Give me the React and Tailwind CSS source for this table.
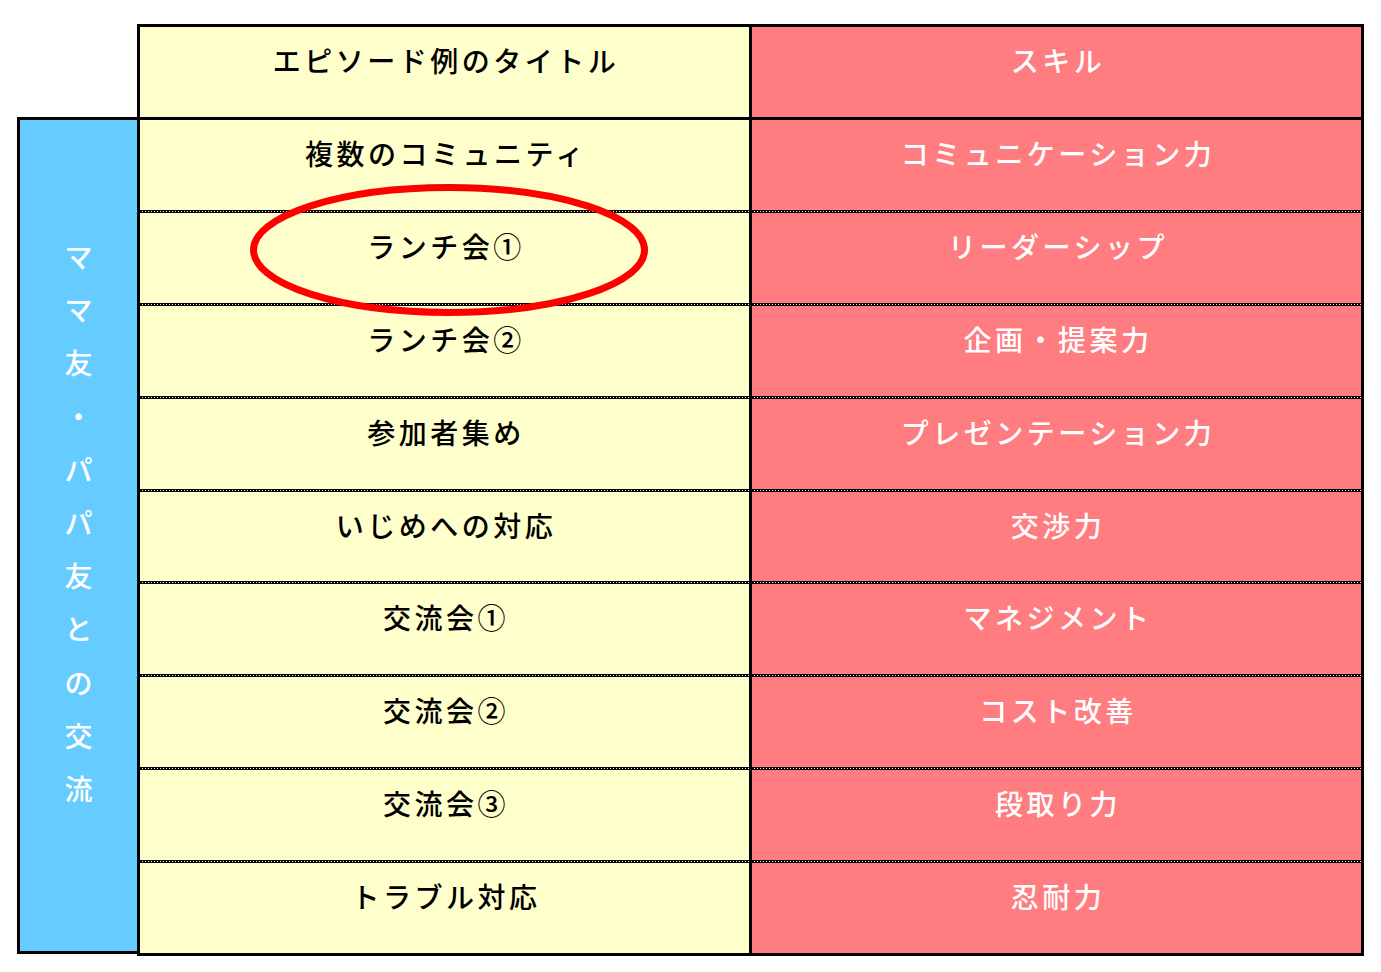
import React from "react";

const rows = [
  ["複数のコミュニティ", "コミュニケーション力"],
  ["ランチ会①", "リーダーシップ"],
  ["ランチ会②", "企画・提案力"],
  ["参加者集め", "プレゼンテーション力"],
  ["いじめへの対応", "交渉力"],
  ["交流会①", "マネジメント"],
  ["交流会②", "コスト改善"],
  ["交流会③", "段取り力"],
  ["トラブル対応", "忍耐力"],
];

const vertical = ["マ", "マ", "友", "・", "パ", "パ", "友", "と", "の", "交", "流"];

const font = { fontFamily: '"Noto Sans CJK JP", "Noto Sans", sans-serif' };

function Dotted() {
  return (
    <div className="grid grid-cols-[609px_3px_609px] h-[3px]">
      <div className="border-y border-black bg-[repeating-linear-gradient(90deg,#000_0_2px,#fff_2px_3px)]" />
      <div className="bg-black" />
      <div className="border-y border-black bg-[repeating-linear-gradient(90deg,#000_0_2px,#fff_2px_3px)]" />
    </div>
  );
}

function Cell({ children, red }) {
  return (
    <div
      className={
        "flex justify-center items-start pt-[12px] text-[28px] font-medium leading-[42px] tracking-[3.5px] " +
        (red ? "bg-[#FF7C80] text-white border-l-3 border-black" : "bg-[#FFFFCC] text-black")
      }
    >
      <span className="pl-[3px]">{children}</span>
    </div>
  );
}

export default function App() {
  return (
    <div className="relative w-[1381px] h-[972px] bg-white" style={font}>
      <div className="flex pl-[17px] pt-[24px]">
        <div className="w-[120px] mt-[93px] h-[837px] bg-[#66CCFF] border-l-3 border-y-3 border-black flex flex-col items-center justify-center pb-[27px] text-white text-[28px] font-medium">
          {vertical.map((c, i) => (
            <div key={i} className="h-[53.2px] flex items-center justify-center leading-none">
              {c}
            </div>
          ))}
        </div>
        <div className="w-[1227px] border-3 border-black flex flex-col">
          <div className="grid grid-cols-[609px_612px] h-[90px]">
            <Cell>エピソード例のタイトル</Cell>
            <Cell red>スキル</Cell>
          </div>
          <div className="h-[3px] bg-black" />
          {rows.map((r, i) => (
            <React.Fragment key={i}>
              {i > 0 && <Dotted />}
              <div className="grid grid-cols-[609px_612px] h-[89.9px]">
                <Cell>{r[0]}</Cell>
                <Cell red>{r[1]}</Cell>
              </div>
            </React.Fragment>
          ))}
        </div>
      </div>
      <svg
        className="absolute left-[250px] top-[184px]"
        width="398"
        height="132"
        viewBox="0 0 398 132"
      >
        <ellipse cx="199" cy="66" rx="195.5" ry="62.5" fill="none" stroke="#FF0000" strokeWidth="7" />
      </svg>
    </div>
  );
}
